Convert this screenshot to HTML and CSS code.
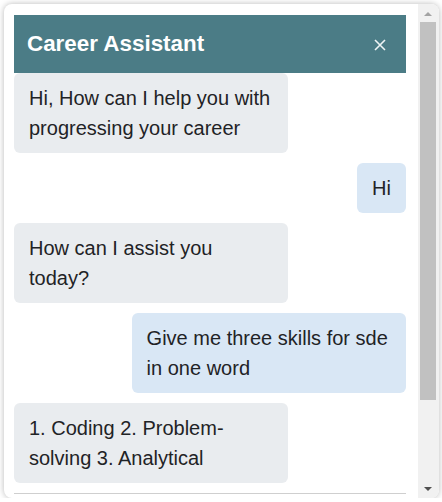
FILE: index.html
```html
<!DOCTYPE html>
<html>
<head>
<meta charset="utf-8">
<link rel="stylesheet" href="styles.css">
</head>
<body>
<div class="window">
  <div class="chat">
    <div class="header">
      <span class="title">Career Assistant</span>
      <button class="close" aria-label="Close">
        <svg width="12" height="12" viewBox="0 0 12 12"><path d="M1 1 L11 11 M11 1 L1 11" stroke="#eef4f5" stroke-width="1.6" fill="none"/></svg>
      </button>
    </div>
    <div class="messages">
      <div class="msg bot">Hi, How can I help you with progressing your career</div>
      <div class="msg user">Hi</div>
      <div class="msg bot">How can I assist you today?</div>
      <div class="msg user">Give me three skills for sde in one word</div>
      <div class="msg bot">1. Coding 2. Problem-solving 3. Analytical</div>
    </div>
    <div class="composer"></div>
  </div>
  <div class="scrollbar" aria-hidden="true">
    <div class="arrow">
      <svg width="8" height="5" viewBox="0 0 8 5"><path d="M0 5 L4 1 L8 5 Z" fill="#a3a3a3"/></svg>
    </div>
    <div class="track"><div class="thumb"></div></div>
    <div class="arrow">
      <svg width="8" height="5" viewBox="0 0 8 5"><path d="M0 0 L8 0 L4 4 Z" fill="#505050"/></svg>
    </div>
  </div>
</div>
</body>
</html>
```
FILE: styles.css
```css
html, body {
  margin: 0;
  padding: 0;
  background: #ffffff;
  font-family: "Liberation Sans", Arial, sans-serif;
}
.window {
  display: flex;
  width: 435px;
  height: 494px;
  margin: 4px 0 0 4px;
  background: #ffffff;
  border-radius: 8px;
  box-shadow: 0 0 6px rgba(0, 0, 0, 0.28);
  overflow: hidden;
}
.chat {
  flex: 1;
  min-width: 0;
  padding: 11px 12px 0 10px;
  overflow: hidden;
}
.scrollbar {
  display: flex;
  flex-direction: column;
  width: 21px;
  background: #f1f1f1;
}
.arrow {
  display: flex;
  align-items: center;
  justify-content: center;
  height: 18px;
  padding-right: 1px;
}
.track {
  flex: 1;
  padding: 0 3px 0 2px;
}
.thumb {
  height: 378px;
  background: #c1c1c1;
}
.header {
  display: flex;
  align-items: center;
  justify-content: space-between;
  height: 58px;
  padding: 0 20px 0 13px;
  background: #4b7c86;
  color: #ffffff;
}
.title {
  font-size: 22.4px;
  font-weight: bold;
  line-height: 26px;
  margin-top: -1px;
}
.close {
  display: flex;
  align-items: center;
  justify-content: center;
  width: 12px;
  height: 12px;
  padding: 0;
  margin-top: 2px;
  border: none;
  background: transparent;
}
.messages {
  display: flex;
  flex-direction: column;
  gap: 10px;
  padding-bottom: 10px;
}
.msg {
  box-sizing: border-box;
  max-width: 70%;
  padding: 10px 15px;
  border-radius: 6px;
  font-size: 20px;
  line-height: 30px;
  color: #1f2326;
}
.bot {
  align-self: flex-start;
  width: 70%;
  background: #e9ecef;
}
.user {
  align-self: flex-end;
  background: #d9e7f5;
}
.composer {
  height: 100px;
  border-top: 1px solid #cfcfcf;
}
```
